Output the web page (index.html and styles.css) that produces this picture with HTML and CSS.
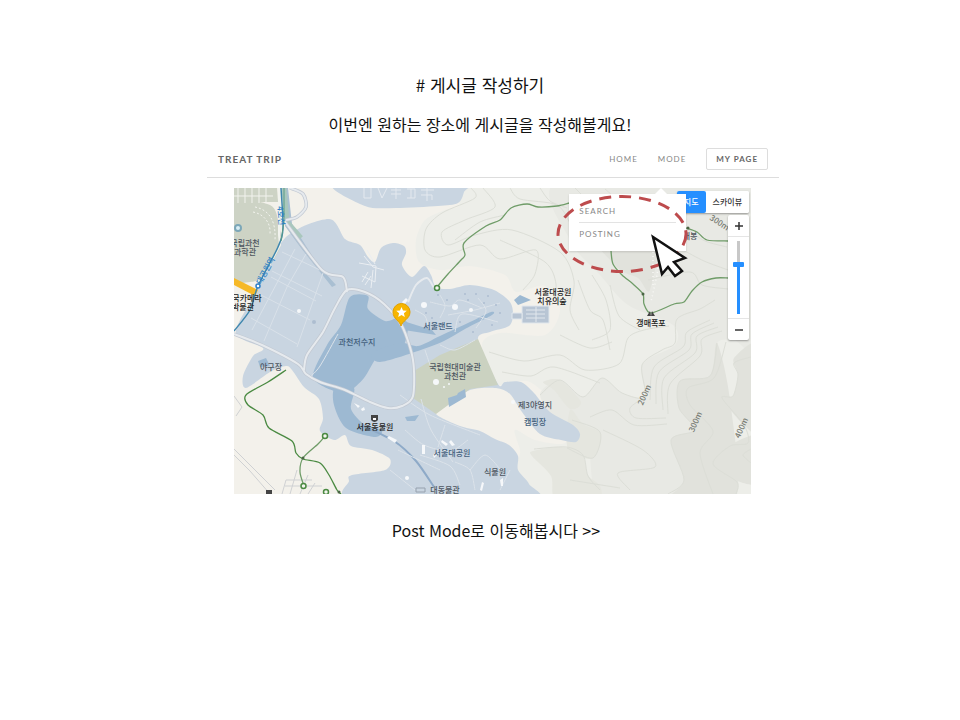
FILE: index.html
```html
<!DOCTYPE html>
<html lang="ko">
<head>
<meta charset="utf-8">
<meta name="viewport" content="width=device-width, initial-scale=1">
<title>Treat Trip</title>
<link rel="stylesheet" href="styles.css">
</head>
<body>
<main class="guide">
  <h1 class="note note-title"># 게시글 작성하기</h1>
  <p class="note note-lead">이번엔 원하는 장소에 게시글을 작성해볼게요!</p>

  <section class="demo">
    <header class="bar">
      <a class="brand" href="#">TREAT TRIP</a>
      <nav class="nav">
        <a class="nav-link" href="#">HOME</a>
        <div class="mode">
          <a class="nav-link" href="#">MODE</a>
          <div class="menu">
            <a class="menu-link" href="#">SEARCH</a>
            <a class="menu-link" href="#">POSTING</a>
            <svg class="callout" viewBox="0 0 134 86" aria-hidden="true">
              <ellipse cx="66" cy="41" rx="64" ry="37.5" fill="none" stroke="#bd4b4d" stroke-width="3" stroke-dasharray="12 8"/>
              <path d="M97 44 L106 81 L112 74 L119 83 L126 78 L118 69 L129 65 Z" fill="#fff" stroke="#111" stroke-width="2.5" stroke-linejoin="miter"/>
            </svg>
          </div>
        </div>
        <button class="mypage" type="button">MY PAGE</button>
      </nav>
    </header>

    <div class="map">
      <svg class="canvas" viewBox="234 188 517 306" role="img" aria-label="서울대공원 지도">
        <rect x="234" y="188" width="517" height="306" fill="#f3f1eb"/>
        <!-- hills -->
        <path class="soft" d="M464 180 L460 205 L445 210 L425 220 L416 240 L419 262 L440 270 L470 266 L505 275 L516 292 L545 286 L560 310 L545 335 L500 333 L482 345 L498 384 L530 382 L570 420 L565 443 L535 440 L515 430 L520 450 L532 500 L760 500 L760 180 Z" fill="#edeee9"/>
        <path class="soft" d="M560 180 L760 180 L760 345 L734 340 L717 343 L710 376 L680 381 L680 410 L695 430 L671 440 L684 480 L670 500 L600 500 L587 440 L560 425 L540 395 L560 380 L583 397 L602 378 L622 393 L645 397 L642 364 L675 345 L673 325 L628 305 L600 275 L570 240 Z" fill="#e8e9e4"/>
        <path class="soft" d="M760 345 L734 358 L738 375 L733 396 L722 398 L744 425 L760 430 Z M760 436 L729 446 L713 464 L735 480 L760 482 Z M590 230 L655 230 L650 290 L638 278 L618 268 Z M717 343 L710 376 L680 381 L679 408 L695 430 L671 440 L684 480 L670 500 L735 500 L730 400 Z" fill="#e1e2dc"/>
        <path class="soft" d="M533 451 L560 447 L582 454 L588 475 L600 486 L598 500 L556 500 L551 476 L532 456 Z M543 382 L560 380 L581 402 L570 409 L554 390 Z M570 410 L583 424 L601 434 L593 458 L568 450 Z" fill="#e5e6df"/>
        <g class="soft contours">
          <path d="M471 188 L475 198 L442 213 L426 229 L425 250 L440 257 L480 245 L500 259 L536 250 L535 274 L523 290"/>
          <path d="M483 188 L495 207 L465 220 L442 232 L448 245 L475 235 L512 230 L560 252 L574 281 L570 310 L579 330"/>
          <path d="M510 188 L520 199 L557 205 L571 225 M540 188 L550 201 L567 208 M575 188 L581 194 M605 189 L612 195"/>
          <path d="M489 352 L524 361 L560 355 L585 370 L619 364 L628 338 L644 330 L669 326 M502 372 L531 376 L554 367 L600 383"/>
          <path d="M540 395 L560 380 L583 397 L602 378 L622 393 L645 397 L642 365 L662 350 L675 343 L677 319 L700 309 L715 300"/>
          <path d="M650 400 L654 367 L683 347 L687 332 L710 320 M663 410 L664 378 L695 353 L697 336 L718 327 M656 404 L659 372 L689 350 L692 334 L714 323 M668 414 L670 384 L700 356 L702 339 L722 331"/>
          <path d="M717 343 L710 376 L680 381 L679 408 L695 430 L671 440 L684 480 L668 494 M726 342 L714 378 L688 388 L690 405 L713 431 L700 453 L713 494"/>
          <path d="M751 357 L734 363 L738 375 L733 396 L722 398 L744 425 L748 443 L730 446 L713 464 L737 482 L736 494 M751 449 L743 455 L751 463"/>
          <path d="M590 417 L612 410 L634 425 L667 424 M603 430 L643 450 L655 467 L618 473 L630 490 M570 480 L620 488 M645 397 L630 408 L636 418 L666 418"/>
          <path d="M572 420 L600 432 L593 458 L567 448 M534 449 L566 447 L583 455 L588 476 L600 490"/>
          <path d="M688 230 L705 241 L727 247 M683 250 L704 261 L728 270 M648 280 L690 272 L702 285 L728 289 M610 285 L619 316 L640 330 M578 280 L590 310 L603 320 L610 350"/>
          <path d="M455 240 L480 222 L505 215 M500 240 L545 262 L556 284 L552 305 M592 340 L610 330 L606 300 L592 275 M560 335 L590 348 L612 342"/>
        </g>
        <!-- park grounds -->
        <g class="soft" fill="#c9d5e1">
          <path d="M335 183 L365 206 L396 208 L438 206 L458 203 L464 192 L465 180 Z"/>
          <path d="M285 238 L329 219 L345 239 L360 245 L368 257 L375 262 L381 248 L393 243 L404 246 L406 253 L402 265 L412 277 L424 266 L431 275 L436 287 L450 289 L470 285 L494 290 L510 302 L513 315 L509 326 L490 332 L478 340 L498 384 L505 382 L521 382 L534 393 L550 412 L573 425 L580 434 L576 442 L561 440 L540 434 L522 412 L510 394 L496 388 L470 390 L447 405 L436 414 L460 426 L480 431 L495 439 L509 445 L518 456 L518 470 L529 484 L530 500 L355 500 L349 481 L352 475 L385 470 L390 459 L372 450 L351 446 L345 435 L334 440 L320 431 L323 418 L319 399 L304 387 L292 370 L286 366 L270 372 L246 388 L243 376 L253 356 L263 348 L236 333 L255 294 Z"/>
        </g>
        <path class="soft" d="M230 205 L270 205 L279 225 L280 248 L262 276 L250 282 L230 276 Z" fill="#cdd3c5"/>
        <path d="M234 188 H277 L278 202 H234Z" fill="#cdd3c5"/>
        <path d="M478 339 L498 385 L470 389 L436 414 L413 398 L414 371 L440 355Z" fill="#cbd2c1"/>
        <!-- water -->
        <g class="soft" fill="#9db9d2">
          <path d="M350 297 L368 296 L368 309 L385 321 L398 318 L408 324 L404 345 L393 352 L378 356 L364 378 L349 391 L334 391 L313 377 L327 345 L341 325 Z"/>
          <path d="M335 387 L354 388 L351 409 L365 425 L382 430 L375 437 L346 428 L334 405 Z"/>
          <path d="M372 353 L400 343 L418 346 L440 336 L470 322 L491 312 L492 315 L465 329 L444 341 L418 351 L380 362 Z"/>
        </g>
        <g fill="#9db9d2">
          <path d="M400 320 L432 330 L436 335 L404 330Z M514 300 L520 295 L531 300 L518 305Z M448 398 L457 395 L458 393 L465 389 L466 397 L449 407Z M258 361 L266 358 L270 366 L260 367Z M405 417 L419 415 L415 421 L407 421Z"/>
          <path d="M282 188 L288 188 L292 224 L318 265 L336 285 L332 287 L301 248 L285 226Z" fill="#a9bfd2"/>
        </g>
        <path class="soft" d="M363 426 L394 441 L416 461 L434 487" fill="none" stroke="#8eaac8" stroke-width="2"/>
        <path d="M284 188 L287 222 L301 238" fill="none" stroke="#a9c7bd" stroke-width="5"/>
        <!-- buildings and parking lots -->
        <g fill="none" stroke="#e4e9ef" stroke-width="1">
          <path d="M364 188 V198 H371 V188 M378 188 L382 198 L387 188 M391 190 H401 M391 194 H401 M396 188 V199 M407 189 H415 V198 H407 M411 189 V198 M421 190 H434 M421 195 H432 V200 M427 188 V201"/>
        </g>
        <g fill="none" stroke="#d9e1e9" stroke-width="1">
          <path d="M282 252 L320 270 M272 271 L322 296 M261 295 L310 320 M251 318 L297 344 M306 254 L287 287 L264 341 M295 249 L252 330 M323 273 L297 347 M271 277 L316 301"/>
          <path d="M364 256 L373 267 L384 270 M367 250 L375 264 M359 263 L376 266 L375 282 L362 276 M373 270 L371 288 M362 282 L368 272 M365 285 L371 276" stroke="#eaeef2"/>
        </g>
        <g class="soft" fill="none" stroke="#dce3ea" stroke-width="1">
          <path d="M430 302 L450 306 L460 300 L482 308 M448 315 L475 310 L500 303 M478 298 L486 311 L476 328 M455 332 L462 314 L498 322 M440 345 L455 350 L475 340 M425 350 L430 365 M415 310 L425 316 L428 326 M440 295 L445 306 L440 318"/>
          <path d="M405 430 L424 445 L450 451 L468 440 M420 455 L450 466 L460 485 M470 470 L485 455 L500 469 M398 450 L440 470 M445 425 L438 447 M390 470 L415 490 M421 399 L431 430 L453 462 M475 490 L470 470 L455 462 M500 490 L510 470"/>
          <path d="M400 395 L430 415 L480 435 M338 334 L320 366 L310 377"/>
        </g>
        <g fill="#b8c5d4" stroke="#e1e7ed">
          <path d="M522 306 L549 306 L549 323 L522 323Z M526 310 H545 M526 314 H545 M526 318 H545 M536 307 V322"/>
          <path d="M512 313 H522 V319 H512Z"/>
        </g>
        <g fill="#f6f8fa">
          <path d="M422 445 h3 v9 h-3z M442 440 l6 4 -2 2 -5-4z M451 440 l4 5 -3 1 -3-4z M389 436 l8 4 -2 3 -8-5z M354 403 l6 3 -2 2z M361 409 l3 -2 1 3 -3 1z M402 302 l4-4 2 2 -4 5z M433 455 l4-4 2 2 -5 5z M480 490 l2 -8 2 1 -2 8z M500 480 l3 -2 v8 h-2z"/>
          <circle cx="424" cy="305" r="3"/><circle cx="455" cy="307" r="3"/><circle cx="471" cy="310" r="2"/><circle cx="407" cy="478" r="2"/><circle cx="436" cy="382" r="3"/><circle cx="444" cy="387" r="1"/><circle cx="449" cy="384" r="1"/><circle cx="299" cy="311" r="2"/><circle cx="513" cy="402" r="2"/>
        </g>
        <path d="M416 488 h9 v4 h-9z" fill="none" stroke="#96a1ae"/>
        <g fill="#adbdd0">
          <circle cx="468" cy="300" r="1"/><circle cx="480" cy="319" r="1"/><circle cx="492" cy="325" r="1"/><circle cx="484" cy="303" r="1"/><circle cx="460" cy="322" r="1"/><circle cx="447" cy="300" r="1"/><circle cx="438" cy="295" r="1"/><circle cx="500" cy="313" r="1"/><circle cx="426" cy="313" r="1"/><circle cx="473" cy="332" r="1"/><circle cx="488" cy="296" r="1"/><circle cx="314" cy="322" r="2"/><circle cx="476" cy="294" r="1"/><circle cx="496" cy="305" r="1"/><circle cx="465" cy="294" r="1"/><circle cx="432" cy="318" r="1"/>
        </g>
        <!-- roads -->
        <g class="soft" fill="none" stroke="#c2c9d3" stroke-width="3.5">
          <path d="M234 334 L262 345 L298 364 L306 374 L320 382 L345 390 L370 402 L388 408 L402 406 L413 396 L413 360 L402 326 L384 304 L365 292 L347 290 L335 308 L323 332 L307 355 L304 370"/>
          <path d="M283 219 L322 270 L343 277 L347 292 M290 188 L303 194 L306 207 L297 217 L286 220"/>
        </g>
        <g class="soft" fill="none" stroke="#e6eaee" stroke-width="2">
          <path d="M234 334 L262 345 L298 364 L306 374 L320 382 L345 390 L370 402 L388 408 L402 406 L413 396 L413 360 L402 326 L384 304 L365 292 L347 290 L335 308 L323 332 L307 355 L304 370"/>
          <path d="M283 219 L322 270 L343 277 L347 292 M290 188 L303 194 L306 207 L297 217 L286 220 M408 302 L416 285 L427 278 L434 288"/>
        </g>
        <g fill="none" stroke="#f2f3ee">
          <path d="M234 196 H273 M238 188 V203 M245 188 V203 M252 188 V203 M259 188 V203 M266 188 V203"/>
          <path d="M255 207 C270 210 276 222 275 240 M253 212 C264 214 271 223 270 234" stroke-dasharray="2 2"/>
          <path d="M279 188 V235 L280 245 L262 279" stroke-width="2"/>
        </g>
        <g fill="none" stroke="#cfd1d3">
          <path d="M234 396 L242 407 L236 416 M234 449 L253 468 L275 490 M234 455 L250 471 L270 494 M282 494 L286 480 L312 480 M290 494 L297 470 M300 494 L308 475 M308 494 L315 483 M285 486 H322"/>
        </g>
        <path d="M234 278 L258 290 L255 296 L234 285Z" fill="#f6b928"/>
        <path class="soft" d="M281 188 L283 228 L278 247 L258 286 L250 310 L234 331" fill="none" stroke="#3f87ae" stroke-width="1.5"/>
        <path d="M284 188 V222 L281 241" fill="none" stroke="#5a9b86" stroke-width="1"/>
        <!-- trails -->
        <g class="soft" fill="none" stroke="#6f9c68" stroke-width="1.3">
          <path d="M437 287 L448 274 L461 260 L465 255 L464 243 L486 226 L500 220 L511 208 L527 204 L538 207 L557 206 L569 203"/>
          <path d="M286 370 L268 382 L246 395 L248 405 L263 415 L269 428 L292 441 L296 453 L303 459 L320 463 L329 475 L337 490 L341 494" stroke="#4a8a42"/>
          <path d="M325 436 L318 444 L303 458 L300 472 L304 486 M611 251 L613 264 L622 275 L633 284 L643 294 L644 304 L651 313 L674 304 L684 302 L692 291 L702 282 L716 278 L728 278 M686 228 L697 232 L707 240 L728 241"/>
        </g>
        <g fill="#f3f5ee" stroke="#4a8a42" stroke-width="1.5">
          <circle cx="437" cy="288" r="2.500"/><circle cx="325" cy="436" r="2.500"/><circle cx="303.500" cy="486" r="2.500"/><circle cx="326" cy="492" r="2.500"/>
        </g>
        <g fill="#4a6545"><circle cx="643" cy="294" r="1.500"/><circle cx="688" cy="228" r="1.500"/><circle cx="303" cy="458" r="1.500"/><circle cx="339" cy="492" r="1.500"/></g>
        <g fill="none" stroke="#f8f8f5" stroke-width="1.500" stroke-dasharray="1 3"><path d="M660 252 L657 275 L651 302 M653 252 V285"/></g>
        <circle cx="238" cy="228" r="3" fill="#d9eef5" stroke="#7ca7b8" stroke-width="2"/>
        <circle cx="258" cy="286" r="2" fill="#fff" stroke="#2f80c8" stroke-width="1.500"/>
        <!-- place symbols -->
        <path d="M647 316 L650 311 L651 316Z M651 316 L652 311 L655 316Z M266 490 h6 v4 h-6z" fill="#444"/>
        <path d="M371 415 h7 v5 q-3.500 4 -7 0z" fill="#444"/><path d="M373 418 h3 v2 h-3z" fill="#fff"/>
        <path d="M401 326 C400 321 393 319 393 312 A8.500 8.500 0 0 1 410 312 C410 319 402 321 401 326Z" fill="#f7b500" stroke="#e0a000" stroke-width="1"/>
        <path d="M401.500 307 l1.500 3.500 3.800.3 -2.900 2.500 .9 3.700 -3.300-2 -3.300 2 .9-3.700 -2.900-2.500 3.800-.3z" fill="#fff"/>
        <!-- labels -->
        <g class="labels">
          <text x="245" y="246">국립과천</text><text x="245" y="255">과학관</text>
          <text class="dark" x="247" y="301">국카메라</text><text class="dark" x="243" y="310">박물관</text>
          <text class="rail" transform="translate(268 272) rotate(-62)">대공원역</text>
          <text class="rail" transform="translate(278 216) rotate(84)">4호선</text>
          <text class="water" x="357" y="345">과천저수지</text>
          <text x="271" y="370">야구장</text>
          <text class="water" x="438" y="329">서울랜드</text>
          <text class="dark" x="553" y="295">서울대공원</text><text class="dark" x="552" y="304">치유의숲</text>
          <text x="455" y="370">국립현대미술관</text><text x="455" y="379">과천관</text>
          <text class="dark" x="375" y="430">서울동물원</text>
          <text x="535" y="408">제3야영지</text>
          <text class="water" x="535" y="425">캠핑장</text>
          <text class="water" x="452" y="456">서울대공원</text>
          <text x="495" y="475">식물원</text>
          <text x="445" y="493">대동물관</text>
          <text class="dark" x="651" y="326">갱매폭포</text>
          <text x="690" y="239">매봉</text>
          <text class="height" transform="translate(647 396) rotate(-66)">200m</text>
          <text class="height" transform="translate(698 423) rotate(-66)">300m</text>
          <text class="height" transform="translate(744 429) rotate(-66)">400m</text>
          <text class="height" transform="translate(718 225) rotate(33)">300m</text>
        </g>
      </svg>
      <div class="controls">
        <div class="types">
          <button class="type type-on" type="button">지도</button>
          <button class="type" type="button">스카이뷰</button>
        </div>
        <div class="zoom">
          <button class="step" type="button" aria-label="확대"><svg viewBox="0 0 10 10" aria-hidden="true"><path d="M1 5H9M5 1V9"/></svg></button>
          <input class="level" type="range" min="0" max="100" value="69" aria-label="확대 수준">
          <button class="step" type="button" aria-label="축소"><svg viewBox="0 0 10 10" aria-hidden="true"><path d="M1 5H9"/></svg></button>
        </div>
      </div>
    </div>
  </section>

  <p class="note note-next">Post Mode로 이동해봅시다 &gt;&gt;</p>
</main>
<script src="map.js"></script>
</body>
</html>
```

FILE: map.js
```js
// Turns the straight segments of terrain paths into curves through the same points.
function curve(part) {
  const closed = /Z/.test(part);
  const n = part.match(/-?[\d.]+/g).map(Number);
  const pts = [];
  for (let i = 0; i < n.length; i += 2) pts.push([n[i], n[i + 1]]);
  const len = pts.length;
  const at = (i) => closed ? pts[(i + len) % len] : pts[Math.max(0, Math.min(len - 1, i))];
  let d = "M" + pts[0];
  for (let i = 0; i < (closed ? len : len - 1); i++) {
    const [a, b, c, e] = [at(i - 1), at(i), at(i + 1), at(i + 2)];
    d += "C" + [
      b[0] + (c[0] - a[0]) / 7, b[1] + (c[1] - a[1]) / 7,
      c[0] - (e[0] - b[0]) / 7, c[1] - (e[1] - b[1]) / 7,
      c[0], c[1]
    ].join(" ");
  }
  return d + (closed ? "Z" : "");
}

document.querySelectorAll("path.soft, .soft path").forEach((path) => {
  const parts = path.getAttribute("d").match(/M[^M]+/g);
  path.setAttribute("d", parts.map(curve).join(""));
});
```

FILE: styles.css
```css
* { box-sizing: border-box; }
body {
  margin: 0;
  background: #fff;
  color: #777;
  font-family: Lato, "Noto Sans CJK KR", sans-serif;
}
a { color: inherit; text-decoration: none; }
button { font-family: inherit; cursor: pointer; }

.guide { padding: 71px 16px 48px; }
.note {
  margin: 0;
  color: #111;
  font: 400 16px/28px "Noto Sans CJK KR", sans-serif;
  text-align: center;
}
.note-title { font-size: 17px; }
.note-lead { margin-top: 11px; }
.note-next { margin-top: 22px; padding-left: 32px; }

.demo {
  width: 100%;
  max-width: 598px;
  margin: 0 auto;
  padding-left: 26px;
}
.bar {
  display: flex;
  align-items: center;
  justify-content: space-between;
  height: 40px;
  padding: 2px 11px 0;
  border-bottom: 1px solid #ddd;
}
.brand {
  color: #666;
  font-size: 10px;
  font-weight: 700;
  letter-spacing: 1px;
}
.nav {
  display: flex;
  align-items: center;
  gap: 20px;
}
.nav-link, .menu-link {
  color: #888;
  font-size: 8px;
  line-height: 12px;
  letter-spacing: 1px;
}
.nav-link { display: block; }
.mode { position: relative; }
.mypage {
  height: 22px;
  padding: 0 9px;
  border: 1px solid #ddd;
  border-radius: 2px;
  background: #fff;
  color: #666;
  font-size: 8px;
  font-weight: 700;
  letter-spacing: 1px;
}

.menu {
  position: absolute;
  z-index: 2;
  top: 41px;
  right: 0;
  width: 117px;
  padding: 6px 10px;
  background: #fff;
  box-shadow: 0 1px 2px rgba(0, 0, 0, 0.15);
}
.menu::before {
  content: "";
  position: absolute;
  top: -6px;
  right: 18px;
  border: 7px solid transparent;
  border-top: 0;
  border-bottom-color: #fff;
}
.menu-link {
  display: block;
  padding: 5px 0;
}
.menu-link + .menu-link { border-top: 1px solid #e3e3e3; }
.callout {
  position: absolute;
  top: -1px;
  left: -13px;
  width: 134px;
  height: 86px;
  overflow: visible;
  pointer-events: none;
}

.map {
  position: relative;
  margin: 10px 28px 0 27px;
}
.canvas { display: block; width: 100%; height: auto; }
.contours {
  fill: none;
  stroke: #dcded7;
  stroke-width: 1px;
}
.labels {
  fill: #4d5560;
  font: 500 8px "Noto Sans CJK KR", sans-serif;
  text-anchor: middle;
}
.dark { fill: #222; }
.water { fill: #43607c; }
.rail { fill: #2b7fc4; }
.height { fill: #777b73; }

.controls {
  position: absolute;
  top: 3px;
  right: 2px;
  display: flex;
  flex-direction: column;
  align-items: flex-end;
  gap: 2px;
}
.types, .zoom {
  display: flex;
  border-radius: 2px;
  background: #fff;
  box-shadow: 0 1px 2px rgba(0, 0, 0, 0.35);
}
.type {
  height: 22px;
  padding: 0 7px;
  border: 0;
  border-radius: 2px;
  background: #fff;
  color: #333;
  font: 500 8px/22px "Noto Sans CJK KR", sans-serif;
}
.type-on { background: #258fff; color: #fff; }
.zoom {
  flex-direction: column;
  align-items: center;
  width: 21px;
}
.step {
  display: flex;
  align-items: center;
  justify-content: center;
  width: 100%;
  height: 22px;
  padding: 0;
  border: 0;
  border-bottom: 1px solid #e5e5e5;
  background: none;
}
.step:last-child { border-top: 1px solid #e5e5e5; border-bottom: 0; }
.step svg { width: 10px; height: 10px; fill: none; stroke: #333; stroke-width: 1.5; }
.level {
  appearance: none;
  writing-mode: vertical-lr;
  direction: rtl;
  width: 11px;
  height: 73px;
  margin: 4px 0;
  background: linear-gradient(#c8c8c8 32%, #258fff 32%) center / 3px 100% no-repeat;
}
.level::-webkit-slider-thumb {
  appearance: none;
  width: 11px;
  height: 5px;
  border-radius: 1px;
  background: #258fff;
}
```
